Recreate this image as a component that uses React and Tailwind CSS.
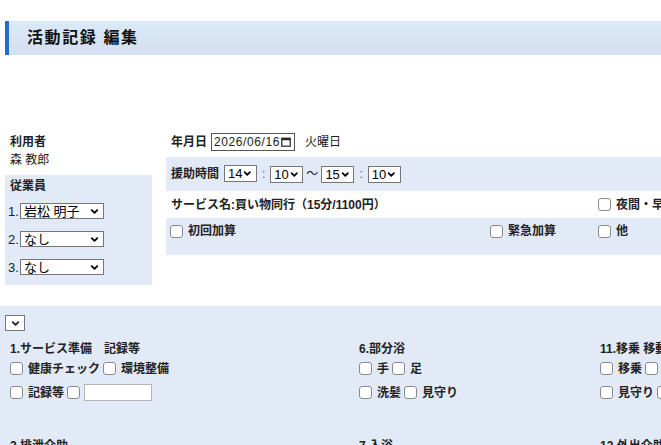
import { ChevronDown } from "lucide-react";

const font = { fontFamily: '"Liberation Sans", "Noto Sans CJK JP", sans-serif' };

function Check({ label, bold = true }) {
  return (
    <span className="inline-flex items-center mr-[3px]">
      <span className="inline-block w-[13px] h-[13px] rounded-[3px] border border-[#8a8a8a] bg-white" />
      {label && <span className={`ml-[5px] ${bold ? "font-bold" : ""}`}>{label}</span>}
    </span>
  );
}

function Select({ value, w, h = "h-[17px]" }) {
  return (
    <span
      className={`inline-flex items-center justify-between ${w} ${h} border border-[#767676] bg-white pl-[3px] pr-[3px] text-[13px] leading-none text-black`}
    >
      <span>{value}</span>
      <ChevronDown size={11} strokeWidth={4} />
    </span>
  );
}

function Block({ title, rows }) {
  return (
    <div className="mb-[31px]">
      <div className="h-[18px] leading-[18px] font-bold">{title}</div>
      {rows.map((row, i) => (
        <div key={i} className={`flex items-center ${i === 0 ? "h-[21px]" : "h-[27px]"}`}>
          {row}
        </div>
      ))}
    </div>
  );
}

export default function App() {
  return (
    <div style={font} className="w-full h-[445px] overflow-hidden bg-white text-[12px] text-[#222]">
      <div className="w-[980px] pt-[21px]">
        <div className="ml-[5px] h-[34px] flex items-center border-l-4 border-[#1b6fd1] bg-gradient-to-b from-[#daeaf9] to-[#d5dff0] pl-[18px] text-[16px] font-bold tracking-[1.6px] text-[#111]">
          活動記録 編集
        </div>

        <div className="mt-[78px] flex items-start">
          {/* 利用者・従業員 */}
          <div className="ml-[5px] w-[147px]">
            <div className="pl-[5px]">
              <div className="h-[18px] leading-[18px] font-bold">利用者</div>
              <div className="h-[18px] leading-[18px]">森 教郎</div>
            </div>
            <div className="mt-[6px] h-[110px] bg-[#e2e9f7] pl-[3px] pt-[2px]">
              <div className="h-[18px] leading-[18px] pl-[2px] font-bold">従業員</div>
              <div className="mt-[8px] flex flex-col gap-[12px]">
                {["岩松 明子", "なし", "なし"].map((name, i) => (
                  <div key={i} className="flex items-center h-[16px] leading-none">
                    <span className="w-[12px] text-[13px] leading-none">{i + 1}.</span>
                    <Select value={name} w="w-[84px]" h="h-[16px]" />
                  </div>
                ))}
              </div>
            </div>
          </div>

          {/* 日時・サービス */}
          <div className="ml-[14px] flex-1">
            <div className="h-[18px] flex items-center pl-[5px]">
              <span className="font-bold">年月日</span>
              <span className="ml-[4px] inline-flex items-center h-[18px] w-[84px] border border-[#555] pl-[2px] pr-[3px] text-[12px]">
                <span className="tracking-[0.6px]">2026/06/16</span>
                <svg className="ml-auto" width="10" height="10" viewBox="0 0 10 10">
                  <rect x="0.8" y="1.2" width="8.4" height="8" fill="none" stroke="#222" strokeWidth="1.2" />
                  <rect x="0.8" y="1.2" width="8.4" height="2" fill="#222" />
                </svg>
              </span>
              <span className="ml-[10px]">火曜日</span>
            </div>

            <div className="mt-[6px] h-[34px] flex items-center bg-[#e2e9f7] pl-[5px]">
              <span className="font-bold">援助時間</span>
              <span className="ml-[5px]"><Select value="14" w="w-[33px]" /></span>
              <span className="mx-[5px] text-[#555]">:</span>
              <Select value="10" w="w-[33px]" />
              <span className="mx-[3px]">～</span>
              <Select value="15" w="w-[33px]" />
              <span className="mx-[5px] text-[#555]">:</span>
              <Select value="10" w="w-[33px]" />
            </div>

            <div className="h-[27px] grid grid-cols-[320px_108px_1fr] items-center pl-[4px]">
              <span className="col-span-2 pl-[1px] font-bold">サービス名:買い物同行（15分/1100円）</span>
              <Check label="夜間・早朝加算" />
            </div>

            <div className="h-[37px] grid grid-cols-[320px_108px_1fr] items-start pt-[4px] bg-[#e2e9f7] pl-[4px]">
              <Check label="初回加算" />
              <Check label="緊急加算" />
              <Check label="他" />
            </div>
          </div>
        </div>

        {/* 援助内容 */}
        <div className="mt-[21px] h-[200px] bg-[#e2e9f7] pt-[9px]">
          <div className="ml-[5px] w-[20px] h-[16px] flex items-center justify-center border border-[#767676] bg-white">
            <ChevronDown size={11} strokeWidth={4} />
          </div>
          <div className="mt-[9px] pl-[10px] grid grid-cols-[349px_241px_241px]">
            <div>
              <Block
                title="1.サービス準備　記録等"
                rows={[
                  <><Check label="健康チェック" /><Check label="環境整備" /></>,
                  <>
                    <Check label="記録等" />
                    <Check />
                    <span className="ml-[1px] inline-block w-[68px] h-[17px] border border-[#b5b5b5] bg-white" />
                  </>,
                ]}
              />
              <div className="h-[18px] leading-[18px] font-bold">2.排泄介助</div>
            </div>
            <div>
              <Block
                title="6.部分浴"
                rows={[
                  <><Check label="手" /><Check label="足" /></>,
                  <><Check label="洗髪" /><Check label="見守り" /></>,
                ]}
              />
              <div className="h-[18px] leading-[18px] font-bold">7.入浴</div>
            </div>
            <div>
              <Block
                title="11.移乗 移動介助"
                rows={[
                  <><Check label="移乗" /><Check label="移動" /></>,
                  <><Check label="見守り" /><Check label="他" /></>,
                ]}
              />
              <div className="h-[18px] leading-[18px] font-bold">12.外出介助</div>
            </div>
          </div>
        </div>
      </div>
    </div>
  );
}
